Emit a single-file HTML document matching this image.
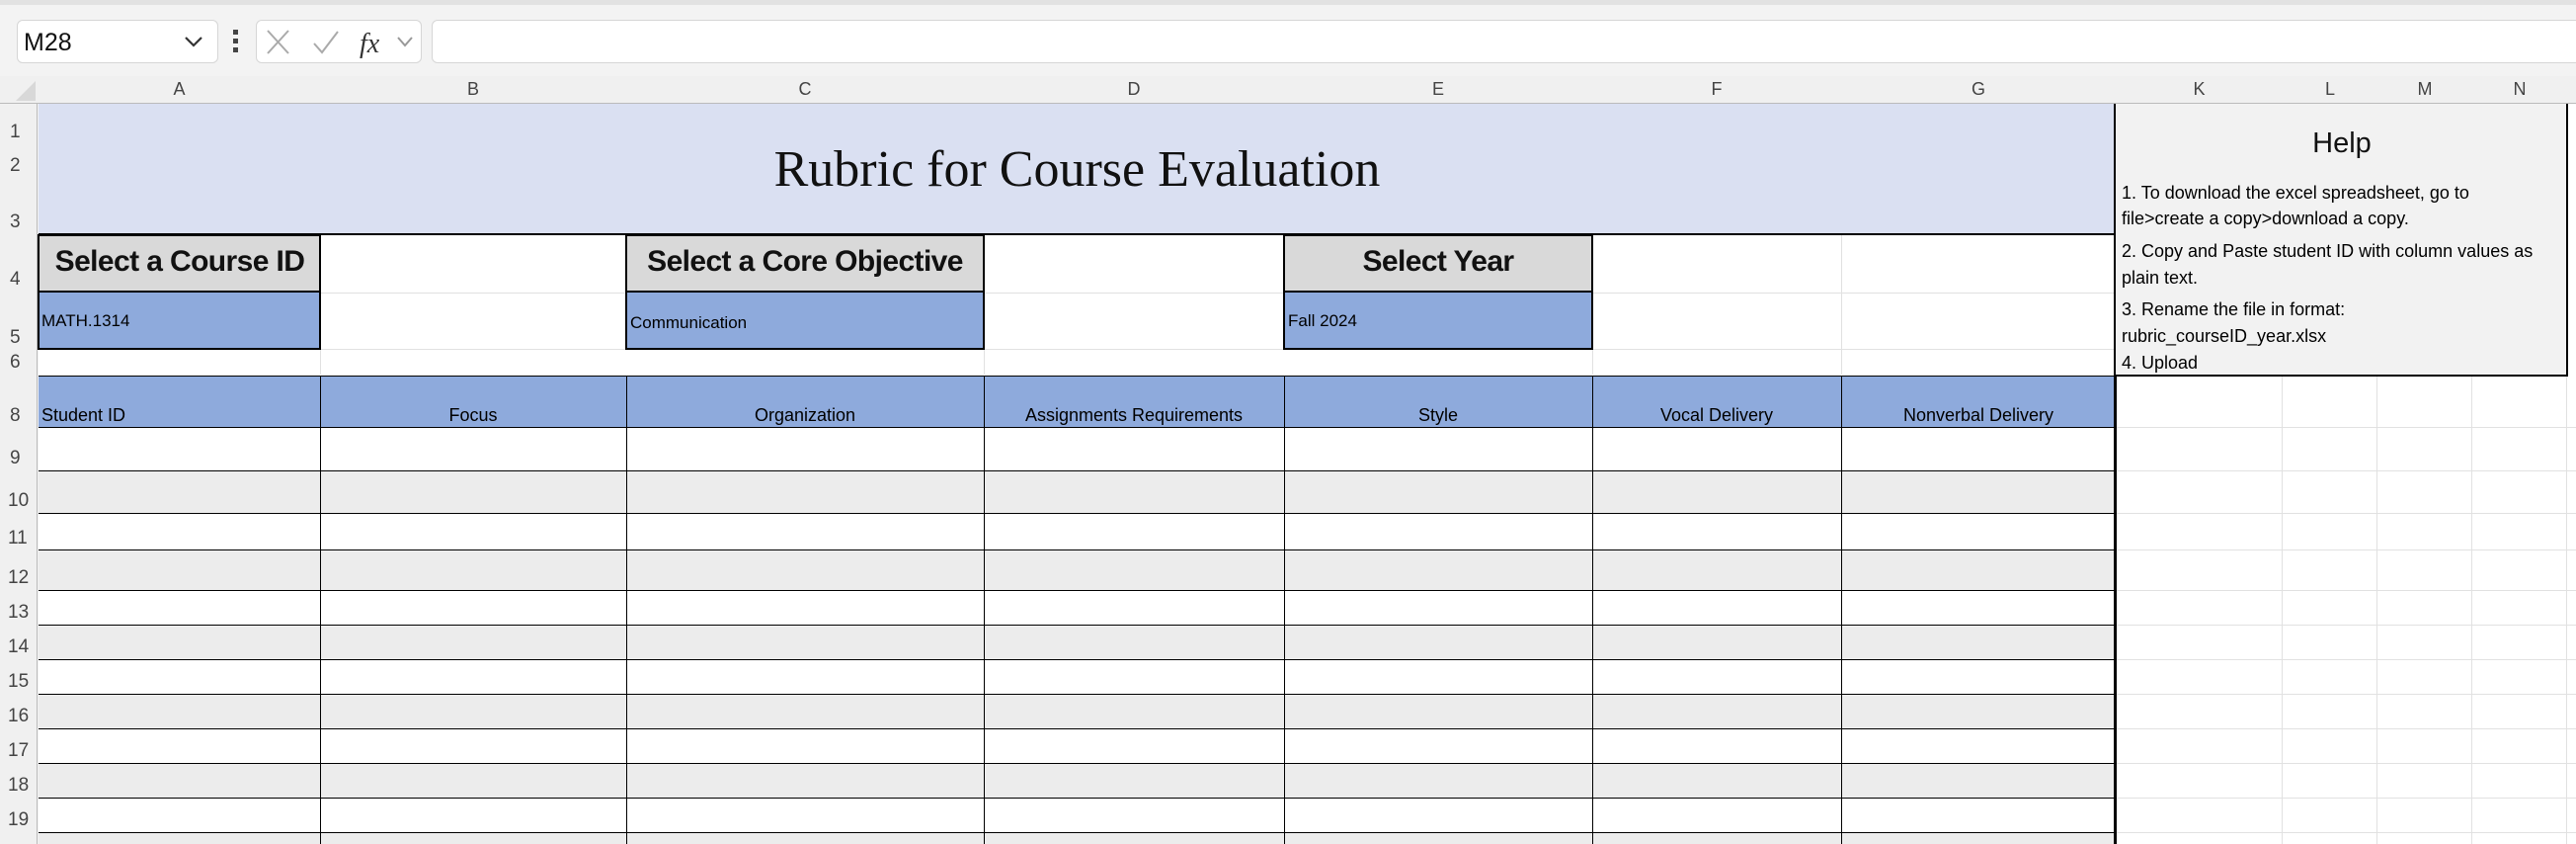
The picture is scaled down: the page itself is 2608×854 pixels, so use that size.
<!DOCTYPE html>
<html><head><meta charset="utf-8"><style>
*{margin:0;padding:0;box-sizing:border-box}
body{width:2608px;height:854px;overflow:hidden;background:#f3f3f3;position:relative;font-family:"Liberation Sans",sans-serif}
.a{position:absolute}
.hdr{color:#444;font-size:18px;text-align:center}
.rn{color:#444;font-size:19px;left:10px;width:26px}
.cl{font-size:18px;color:#000;white-space:nowrap}
.bx{font-weight:bold;font-size:30px;letter-spacing:-0.6px;text-align:center;color:#111}
.help{font-size:18px;color:#000;white-space:nowrap;left:2148px}
</style></head><body>
<div class="a" style="left:0;top:0;width:2608px;height:5px;background:#e2e2e2"></div>
<div class="a" style="left:0;top:5px;width:2608px;height:100px;background:#f3f3f3"></div>
<div class="a" style="left:17px;top:20px;width:204px;height:44px;background:#fff;border:1px solid #d6d6d6;border-radius:6px"></div>
<div class="a" style="left:24px;top:29px;font-size:25px;color:#111">M28</div>
<svg class="a" style="left:186px;top:34px" width="20" height="16"><path d="M2 4 L10 12 L18 4" stroke="#333" stroke-width="2.2" fill="none"/></svg>
<div class="a" style="left:236px;top:30px;width:5px;height:5px;background:#444"></div>
<div class="a" style="left:236px;top:39px;width:5px;height:5px;background:#444"></div>
<div class="a" style="left:236px;top:48px;width:5px;height:5px;background:#444"></div>
<div class="a" style="left:259px;top:20px;width:168px;height:44px;background:#fff;border:1px solid #d6d6d6;border-radius:6px"></div>
<svg class="a" style="left:268px;top:28px" width="160" height="32"><path d="M3 3 L24 26 M24 3 L3 26" stroke="#aaa" stroke-width="2" fill="none"/><path d="M50 16 L58 25 L74 4" stroke="#aaa" stroke-width="2" fill="none"/><text x="96" y="25" font-family="Liberation Serif" font-style="italic" font-size="28" fill="#333">fx</text><path d="M135 10 L142 18 L149 10" stroke="#999" stroke-width="2" fill="none"/></svg>
<div class="a" style="left:437px;top:20px;width:2180px;height:44px;background:#fff;border:1px solid #d6d6d6;border-radius:6px"></div>
<div class="a" style="left:0;top:77px;width:2608px;height:28px;background:#f0f0f0;border-bottom:1px solid #bbb"></div>
<svg class="a" style="left:14px;top:82px" width="24" height="22"><path d="M22 0 L22 20 L2 20 Z" fill="#d8d8d8"/></svg>
<div class="a" style="left:0;top:105px;width:38px;height:749px;background:#f0f0f0;border-right:1px solid #bbb"></div>
<div class="a" style="left:39px;top:105px;width:2569px;height:749px;background:#fff"></div>
<div class="a" style="left:2142px;top:105px;width:466px;height:749px;background:
linear-gradient(90deg,transparent 168px,#e1e1e1 168px,#e1e1e1 169px,transparent 169px,transparent 264px,#e1e1e1 264px,#e1e1e1 265px,transparent 265px,transparent 360px,#e1e1e1 360px,#e1e1e1 361px,transparent 361px,transparent 456px,#e1e1e1 456px,#e1e1e1 457px,transparent 457px)"></div>
<div class="a" style="left:39px;top:105px;width:2103px;height:132px;background:#dae0f2"></div>
<div class="a" style="left:39px;top:142px;width:2103px;text-align:center;font-family:'Liberation Serif',serif;font-size:52px;color:#111">Rubric for Course Evaluation</div>
<div class="a" style="left:39px;top:236px;width:2103px;height:3px;background:#000"></div>
<div class="a" style="left:39px;top:238px;width:2103px;height:141px;background:#fff"></div>
<div class="a" style="left:39px;top:296px;width:2103px;height:1px;background:#e1e1e1"></div>
<div class="a" style="left:39px;top:353px;width:2103px;height:1px;background:#e1e1e1"></div>
<div class="a" style="left:324px;top:238px;width:1px;height:141px;background:#e1e1e1"></div>
<div class="a" style="left:1864px;top:238px;width:1px;height:141px;background:#e1e1e1"></div>
<div class="a" style="left:1612px;top:238px;width:1px;height:141px;background:#e1e1e1"></div>
<div class="a" style="left:996px;top:238px;width:1px;height:141px;background:#e1e1e1"></div>

<div class="a" style="left:38px;top:237px;width:287px;height:117px;border:2px solid #000;background:#8eaadc"><div style="height:57px;background:#d9d9d9;border-bottom:2px solid #000"></div></div>
<div class="a bx" style="left:40px;top:248px;width:284px">Select a Course ID</div>
<div class="a cl" style="left:42px;top:315px;font-size:17px">MATH.1314</div>

<div class="a" style="left:633px;top:237px;width:364px;height:117px;border:2px solid #000;background:#8eaadc"><div style="height:57px;background:#d9d9d9;border-bottom:2px solid #000"></div></div>
<div class="a bx" style="left:635px;top:248px;width:360px">Select a Core Objective</div>
<div class="a cl" style="left:638px;top:317px;font-size:17px">Communication</div>

<div class="a" style="left:1299px;top:237px;width:314px;height:117px;border:2px solid #000;background:#8eaadc"><div style="height:57px;background:#d9d9d9;border-bottom:2px solid #000"></div></div>
<div class="a bx" style="left:1301px;top:248px;width:310px">Select Year</div>
<div class="a cl" style="left:1304px;top:315px;font-size:17px">Fall 2024</div>

<div class="a" style="left:39px;top:380px;width:2103px;height:53px;background:#8eaadc;border-top:1px solid #000;border-bottom:1px solid #000"></div>
<div class="a cl" style="left:42px;top:410px">Student ID</div>
<div class="a cl" style="left:324px;top:410px;width:310px;text-align:center">Focus</div>
<div class="a cl" style="left:634px;top:410px;width:362px;text-align:center">Organization</div>
<div class="a cl" style="left:996px;top:410px;width:304px;text-align:center">Assignments Requirements</div>
<div class="a cl" style="left:1300px;top:410px;width:312px;text-align:center">Style</div>
<div class="a cl" style="left:1612px;top:410px;width:252px;text-align:center">Vocal Delivery</div>
<div class="a cl" style="left:1864px;top:410px;width:278px;text-align:center">Nonverbal Delivery</div>

<div class="a" style="left:39px;top:476px;width:2103px;height:43px;background:#ececec"></div>
<div class="a" style="left:39px;top:556px;width:2103px;height:41px;background:#ececec"></div>
<div class="a" style="left:39px;top:632px;width:2103px;height:35px;background:#ececec"></div>
<div class="a" style="left:39px;top:702px;width:2103px;height:35px;background:#ececec"></div>
<div class="a" style="left:39px;top:772px;width:2103px;height:35px;background:#ececec"></div>
<div class="a" style="left:39px;top:842px;width:2103px;height:12px;background:#ececec"></div>
<div class="a" style="left:39px;top:476px;width:2103px;height:1px;background:#000"></div>
<div class="a" style="left:39px;top:519px;width:2103px;height:1px;background:#000"></div>
<div class="a" style="left:39px;top:556px;width:2103px;height:1px;background:#000"></div>
<div class="a" style="left:39px;top:597px;width:2103px;height:1px;background:#000"></div>
<div class="a" style="left:39px;top:632px;width:2103px;height:1px;background:#000"></div>
<div class="a" style="left:39px;top:667px;width:2103px;height:1px;background:#000"></div>
<div class="a" style="left:39px;top:702px;width:2103px;height:1px;background:#000"></div>
<div class="a" style="left:39px;top:737px;width:2103px;height:1px;background:#000"></div>
<div class="a" style="left:39px;top:772px;width:2103px;height:1px;background:#000"></div>
<div class="a" style="left:39px;top:807px;width:2103px;height:1px;background:#000"></div>
<div class="a" style="left:39px;top:842px;width:2103px;height:1px;background:#000"></div>
<div class="a" style="left:324px;top:380px;width:1px;height:474px;background:#000"></div>
<div class="a" style="left:634px;top:380px;width:1px;height:474px;background:#000"></div>
<div class="a" style="left:996px;top:380px;width:1px;height:474px;background:#000"></div>
<div class="a" style="left:1300px;top:380px;width:1px;height:474px;background:#000"></div>
<div class="a" style="left:1612px;top:380px;width:1px;height:474px;background:#000"></div>
<div class="a" style="left:1864px;top:380px;width:1px;height:474px;background:#000"></div>
<div class="a" style="left:2140px;top:105px;width:3px;height:749px;background:#000"></div>
<div class="a" style="left:2143px;top:432px;width:465px;height:1px;background:#e1e1e1"></div>
<div class="a" style="left:2143px;top:476px;width:465px;height:1px;background:#e1e1e1"></div>
<div class="a" style="left:2143px;top:519px;width:465px;height:1px;background:#e1e1e1"></div>
<div class="a" style="left:2143px;top:556px;width:465px;height:1px;background:#e1e1e1"></div>
<div class="a" style="left:2143px;top:597px;width:465px;height:1px;background:#e1e1e1"></div>
<div class="a" style="left:2143px;top:632px;width:465px;height:1px;background:#e1e1e1"></div>
<div class="a" style="left:2143px;top:667px;width:465px;height:1px;background:#e1e1e1"></div>
<div class="a" style="left:2143px;top:702px;width:465px;height:1px;background:#e1e1e1"></div>
<div class="a" style="left:2143px;top:737px;width:465px;height:1px;background:#e1e1e1"></div>
<div class="a" style="left:2143px;top:772px;width:465px;height:1px;background:#e1e1e1"></div>
<div class="a" style="left:2143px;top:807px;width:465px;height:1px;background:#e1e1e1"></div>
<div class="a" style="left:2143px;top:842px;width:465px;height:1px;background:#e1e1e1"></div>
<div class="a" style="left:2142px;top:105px;width:458px;height:276px;background:#f2f2f2;border:2px solid #000;border-top:none;border-left:none"></div>
<div class="a" style="left:2142px;top:129px;width:458px;text-align:center;font-size:29px;color:#111">Help</div>
<div class="a help" style="top:185px">1. To download the excel spreadsheet, go to</div>
<div class="a help" style="top:211px">file&gt;create a copy&gt;download a copy.</div>
<div class="a help" style="top:244px">2. Copy and Paste student ID with column values as</div>
<div class="a help" style="top:271px">plain text.</div>
<div class="a help" style="top:303px">3. Rename the file in format:</div>
<div class="a help" style="top:330px">rubric_courseID_year.xlsx</div>
<div class="a help" style="top:357px">4. Upload</div>
<div class="a hdr" style="left:39px;top:80px;width:285px">A</div>
<div class="a hdr" style="left:324px;top:80px;width:310px">B</div>
<div class="a hdr" style="left:634px;top:80px;width:362px">C</div>
<div class="a hdr" style="left:996px;top:80px;width:304px">D</div>
<div class="a hdr" style="left:1300px;top:80px;width:312px">E</div>
<div class="a hdr" style="left:1612px;top:80px;width:252px">F</div>
<div class="a hdr" style="left:1864px;top:80px;width:278px">G</div>
<div class="a hdr" style="left:2142px;top:80px;width:169px">K</div>
<div class="a hdr" style="left:2311px;top:80px;width:96px">L</div>
<div class="a hdr" style="left:2407px;top:80px;width:96px">M</div>
<div class="a hdr" style="left:2503px;top:80px;width:96px">N</div>
<div class="a rn" style="top:123px">1</div>
<div class="a rn" style="top:157px">2</div>
<div class="a rn" style="top:214px">3</div>
<div class="a rn" style="top:272px">4</div>
<div class="a rn" style="top:331px">5</div>
<div class="a rn" style="top:356px">6</div>
<div class="a rn" style="top:410px">8</div>
<div class="a rn" style="top:453px">9</div>
<div class="a rn" style="top:496px;left:8px">10</div>
<div class="a rn" style="top:534px;left:8px">11</div>
<div class="a rn" style="top:574px;left:8px">12</div>
<div class="a rn" style="top:609px;left:8px">13</div>
<div class="a rn" style="top:644px;left:8px">14</div>
<div class="a rn" style="top:679px;left:8px">15</div>
<div class="a rn" style="top:714px;left:8px">16</div>
<div class="a rn" style="top:749px;left:8px">17</div>
<div class="a rn" style="top:784px;left:8px">18</div>
<div class="a rn" style="top:819px;left:8px">19</div>
</body></html>
